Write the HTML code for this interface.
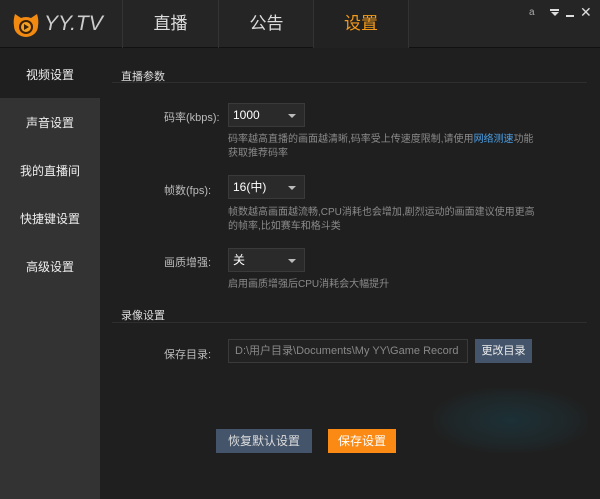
<!DOCTYPE html>
<html><head><meta charset="utf-8"><style>
*{margin:0;padding:0;box-sizing:border-box}
body{width:600px;height:499px;background:#1f1f1f;font-family:"Liberation Sans","Noto Sans CJK SC",sans-serif;position:relative;overflow:hidden;font-size:12px;color:#ccc}
.hdr{position:absolute;left:0;top:0;width:600px;height:48px;background:#252525;border-bottom:1px solid #111}
.tab{position:absolute;top:0;height:48px;line-height:48px;text-align:center;font-size:17px;color:#ddd;border-left:1px solid #333}
.side{position:absolute;left:0;top:48px;width:100px;height:451px;background:#333}
.si{position:absolute;left:0;width:100px;text-align:center;font-size:12px;color:#eee}
.a{position:absolute;white-space:nowrap}
.sel{background:#2a2a2a;border:1px solid #3a3a3a;color:#fff;height:24px;width:77px;line-height:22px;padding-left:4px;font-size:12px}
.sel:after{content:"";position:absolute;right:8px;top:10px;border:4px solid transparent;border-top:4px solid #bbb;border-bottom:0}
.desc{color:#8a8a8a;font-size:10px;line-height:14px}
.lbl{color:#bbb;font-size:11px}
</style></head><body>
<div class="hdr">
<svg class="a" style="left:12px;top:12px" width="28" height="26" viewBox="0 0 28 26"><path d="M3 2 L9 6 Q14 4 19 6 L25 2 Q27 8 26 14 A12 11 0 1 1 2 14 Q1 8 3 2Z" fill="#f28a12"/><circle cx="14" cy="15" r="7" fill="#3a2208"/><circle cx="14" cy="15" r="5" fill="#f5a020"/><path d="M12 12 L17 15 L12 18Z" fill="#3a2208"/></svg>
<div class="a" style="left:44px;top:12px;font-size:21px;color:#ccc;font-style:italic">YY.TV</div>
<div class="tab" style="left:122px;width:96px">直播</div>
<div class="tab" style="left:218px;width:96px">公告</div>
<div class="tab" style="left:313px;width:96px;color:#f59a1a;background:#222;border-right:1px solid #333">设置</div>
<div class="a" style="left:529px;top:7px;font-size:10px;color:#aaa">a</div>
<div class="a" style="left:550px;top:9px;width:9px;height:2px;background:#ddd"></div>
<div class="a" style="left:551px;top:12px;border:4px solid transparent;border-top:4px solid #ddd"></div>
<div class="a" style="left:566px;top:15px;width:8px;height:2px;background:#ddd"></div>
<div class="a" style="left:580px;top:4px;font-size:14px;color:#ddd">✕</div>
</div>
<div class="side">
<div class="a" style="left:0;top:0;width:100px;height:50px;background:#1f1f1f"></div>
<div class="si" style="top:18px">视频设置</div>
<div class="si" style="top:66px">声音设置</div>
<div class="si" style="top:114px">我的直播间</div>
<div class="si" style="top:162px">快捷键设置</div>
<div class="si" style="top:210px">高级设置</div>
</div>
<div class="a" style="left:121px;top:68px;color:#ddd;font-size:11px">直播参数</div>
<div class="a" style="left:112px;top:82px;width:475px;height:1px;background:#2e2e2e"></div>
<div class="a lbl" style="left:164px;top:109px">码率(kbps):</div>
<div class="a sel" style="left:228px;top:103px">1000</div>
<div class="a desc" style="left:228px;top:133px">码率越高直播的画面越清晰,码率受上传速度限制,请使用<span style="color:#4aa0e8">网络测速</span>功能<br>获取推荐码率</div>
<div class="a lbl" style="left:164px;top:182px">帧数(fps):</div>
<div class="a sel" style="left:228px;top:175px">16(中)</div>
<div class="a desc" style="left:228px;top:206px">帧数越高画面越流畅,CPU消耗也会增加,剧烈运动的画面建议使用更高<br>的帧率,比如赛车和格斗类</div>
<div class="a lbl" style="left:164px;top:254px">画质增强:</div>
<div class="a sel" style="left:228px;top:248px">关</div>
<div class="a desc" style="left:228px;top:278px">启用画质增强后CPU消耗会大幅提升</div>
<div class="a" style="left:121px;top:307px;color:#ddd;font-size:11px">录像设置</div>
<div class="a" style="left:112px;top:322px;width:475px;height:1px;background:#2e2e2e"></div>
<div class="a lbl" style="left:164px;top:346px">保存目录:</div>
<div class="a" style="left:228px;top:339px;width:240px;height:24px;border:1px solid #3a3a3a;background:#222;color:#888;font-size:11px;line-height:22px;padding-left:6px;overflow:hidden">D:\用户目录\Documents\My YY\Game Record</div>
<div class="a" style="left:475px;top:339px;width:57px;height:24px;background:#44546a;color:#eee;font-size:11px;line-height:24px;text-align:center">更改目录</div>
<div class="a" style="left:433px;top:388px;width:155px;height:65px;border-radius:40%;background:radial-gradient(ellipse at center,#1c3036,#1f2628 55%,#1f1f1f 75%)"></div>
<div class="a" style="left:216px;top:429px;width:96px;height:24px;background:#44546a;color:#ddd;font-size:12px;line-height:24px;text-align:center">恢复默认设置</div>
<div class="a" style="left:328px;top:429px;width:68px;height:24px;background:#fb8a14;color:#fff;font-size:12px;line-height:24px;text-align:center">保存设置</div>
</body></html>
